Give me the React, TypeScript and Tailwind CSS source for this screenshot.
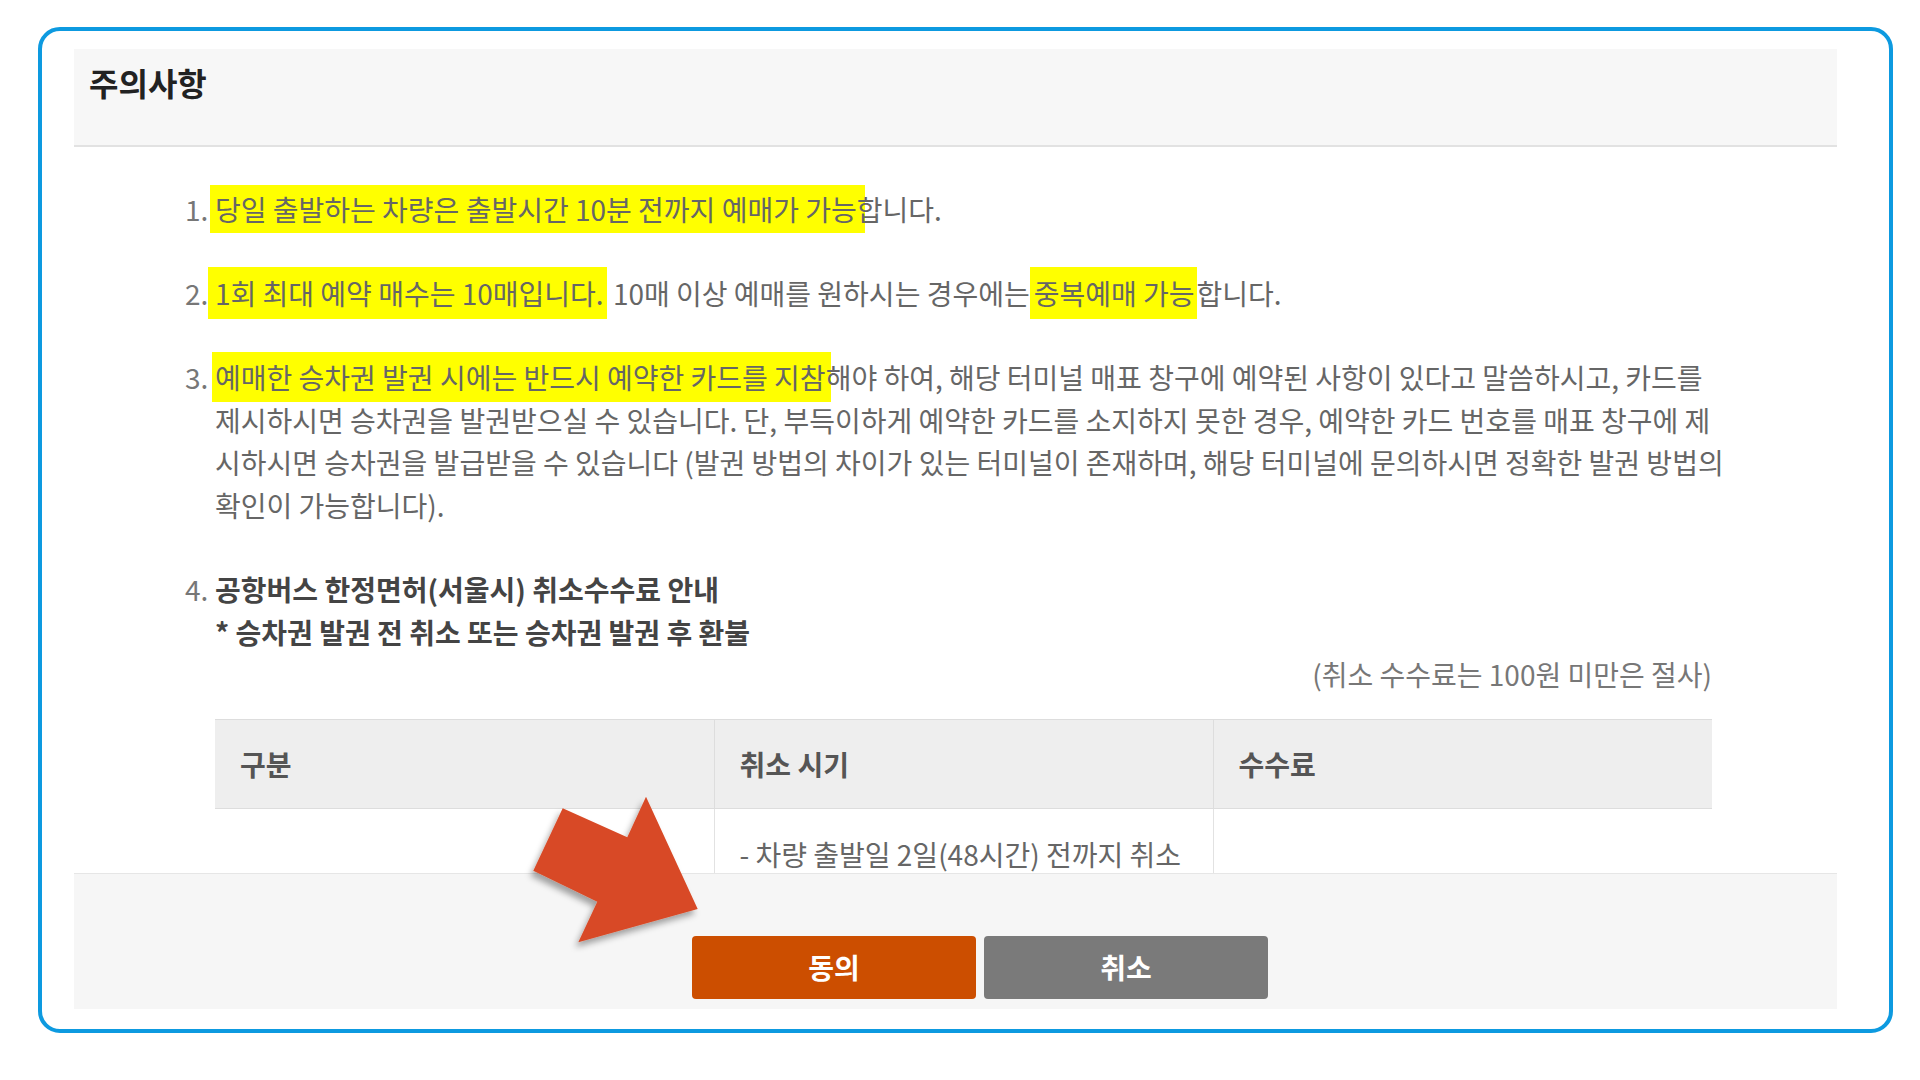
import React from "react";

function Mark({ children, className = "" }: { children: React.ReactNode; className?: string }) {
  return <span className={`bg-[#ffff00] ${className}`}>{children}</span>;
}

function Item({ no, children }: { no: string; children: React.ReactNode }) {
  return (
    <li className="flex">
      <span className="w-[30px] shrink-0 text-[#777]">{no}</span>
      <div className="flex-1 min-w-0">{children}</div>
    </li>
  );
}

function PointerArrow() {
  // big hand-drawn style arrow pointing at the agree button
  return (
    <svg
      className="absolute left-[510px] top-[770px] overflow-visible"
      width="220"
      height="210"
      viewBox="-10 -10 220 210"
    >
      <defs>
        <filter id="arrowShadow" x="-30%" y="-30%" width="160%" height="160%">
          <feDropShadow dx="-3" dy="5" stdDeviation="3" floodColor="#000" floodOpacity="0.35" />
        </filter>
      </defs>
      <polygon
        points="42.7,28.3 107.3,57.3 126,16.7 177.7,129 58.3,162.3 77.3,121.7 13.3,90.7"
        fill="#d84a26"
        filter="url(#arrowShadow)"
      />
    </svg>
  );
}

export default function App() {
  return (
    <div className="relative w-[1920px] h-[1080px] bg-white overflow-hidden font-['Noto_Sans_CJK_KR','Noto_Sans',sans-serif] text-[28px] leading-[42.67px] text-[#666]">
      <div className="ml-[38px] mt-[27px] w-[1855px] h-[1006px] border-4 border-[#0d9ae0] rounded-[22px] pt-[18px] pl-[32px] pr-[52px] pb-[20px] flex flex-col">
        {/* header */}
        <div className="h-[98px] shrink-0 bg-[#f7f7f7] border-b-2 border-[#e2e2e2] pl-[15px] pt-[14px]">
          <h2 className="text-[32px] leading-[38px] font-bold text-[#222]">주의사항</h2>
        </div>

        <div className="flex-1 min-h-0 overflow-hidden pt-[41px] pl-[111px] pr-[125px]">
          <ol className="flex flex-col gap-[41.3px]">
            <Item no="1.">
              <p>
                <Mark className="py-[4px] pl-[5px] -ml-[5px] pr-[8px] -mr-[8px]">
                  당일 출발하는 차량은 출발시간 10분 전까지 예매가 가능
                </Mark>
                합니다.
              </p>
            </Item>
            <Item no="2.">
              <p>
                <Mark className="py-[6px] pl-[7px] -ml-[7px] pr-[3px]">1회 최대 예약 매수는 10매입니다.</Mark> 10매 이상 예매를 원하시는 경우에는
                <Mark className="py-[6px] pl-[4px] pr-[2px]">중복예매 가능</Mark>
                합니다.
              </p>
            </Item>
            <Item no="3.">
              <p className="whitespace-nowrap">
                <Mark className="py-[5px] pl-[3px] -ml-[3px] pr-[5px] -mr-[5px]">
                  예매한 승차권 발권 시에는 반드시 예약한 카드를 지참
                </Mark>
                해야 하여, 해당 터미널 매표 창구에 예약된 사항이 있다고 말씀하시고, 카드를
                <br />
                제시하시면 승차권을 발권받으실 수 있습니다. 단, 부득이하게 예약한 카드를 소지하지 못한 경우, 예약한 카드 번호를 매표 창구에 제
                <br />
                시하시면 승차권을 발급받을 수 있습니다 (발권 방법의 차이가 있는 터미널이 존재하며, 해당 터미널에 문의하시면 정확한 발권 방법의
                <br />
                확인이 가능합니다).
              </p>
            </Item>
            <Item no="4.">
              <p className="font-bold text-[#444]">공항버스 한정면허(서울시) 취소수수료 안내</p>
              <p className="font-bold text-[#444]">* 승차권 발권 전 취소 또는 승차권 발권 후 환불</p>
              <p className="text-right text-[#777]">(취소 수수료는 100원 미만은 절사)</p>

              <table className="mt-[23px] w-full table-fixed border-collapse">
                <thead>
                  <tr className="bg-[#eeeeee] h-[89px] border-t border-b border-[#dddddd]">
                    <th className="text-left font-bold text-[#555] px-[25px] border-r border-[#dddddd]">구분</th>
                    <th className="text-left font-bold text-[#555] px-[25px] border-r border-[#dddddd]">취소 시기</th>
                    <th className="text-left font-bold text-[#555] px-[25px]">수수료</th>
                  </tr>
                </thead>
                <tbody>
                  <tr>
                    <td className="px-[25px] py-[24px] border-r border-[#e2e2e2]"></td>
                    <td className="px-[25px] pt-[24px] pb-[60px] border-r border-[#e2e2e2] align-top">
                      - 차량 출발일 2일(48시간) 전까지 취소
                    </td>
                    <td className="px-[25px] py-[24px]"></td>
                  </tr>
                </tbody>
              </table>
            </Item>
          </ol>
        </div>

        {/* footer buttons */}
        <div className="h-[136px] shrink-0 bg-[#f6f6f6] border-t border-[#e6e6e6] flex justify-center items-start pt-[62px] pl-[49px] gap-[8px]">
          <button className="w-[284px] h-[63px] rounded-[4px] bg-[#cc4e00] text-white font-bold text-[28px]">동의</button>
          <button className="w-[284px] h-[63px] rounded-[4px] bg-[#7a7a7a] text-white font-bold text-[28px]">취소</button>
        </div>
      </div>

      <PointerArrow />
    </div>
  );
}
